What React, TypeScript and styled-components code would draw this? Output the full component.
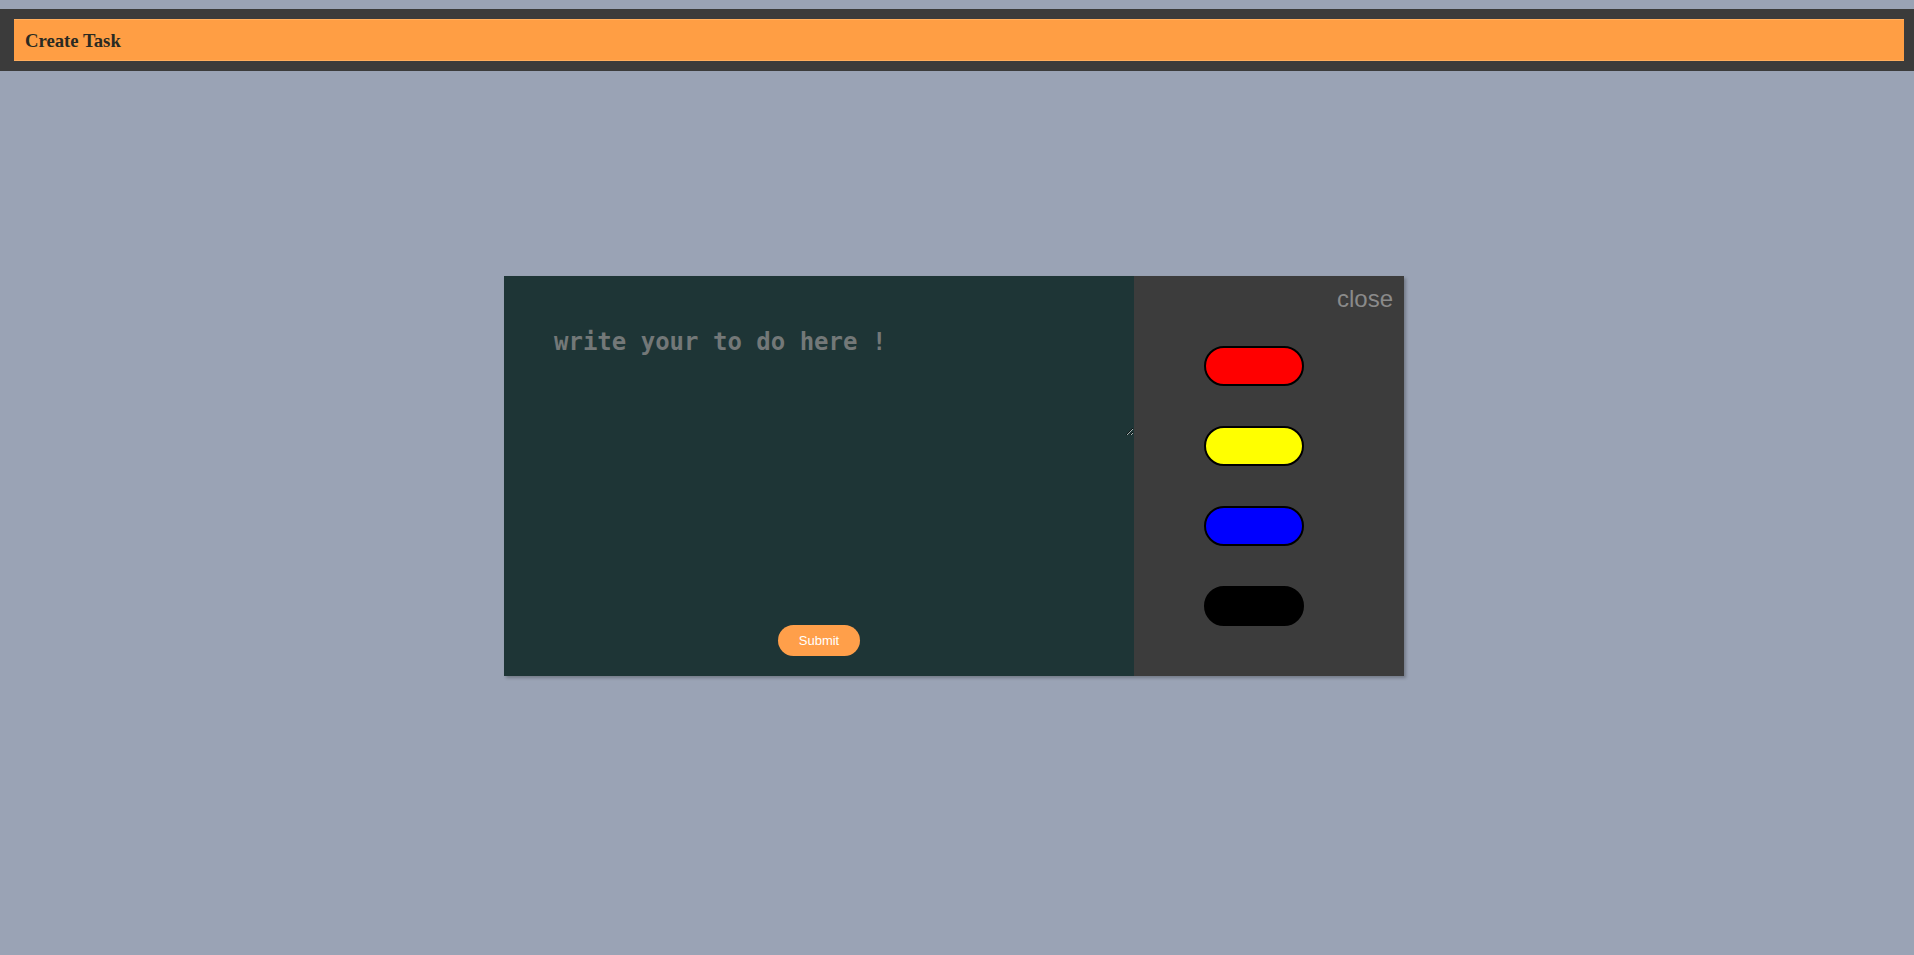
import React from "react";
import styled, { createGlobalStyle } from "styled-components";

const Global = createGlobalStyle`
  html, body { margin: 0; padding: 0; }
  body { background: #9aa3b5; font-family: "Liberation Serif", serif; }
  * { box-sizing: border-box; }
`;

const Page = styled.div`
  min-height: 100vh;
  padding-top: 9px;
  display: flex;
  flex-direction: column;
`;

const HeaderBar = styled.header`
  background: #3b3b3b;
  padding: 10px 10px 10px 14px;
`;

const HeaderInner = styled.div`
  background: #ff9e44;
  height: 42px;
  display: flex;
  align-items: center;
  padding: 0 11px;
  box-shadow: inset 0 1px 0 rgba(255, 190, 120, 0.5), inset 0 -1px 0 rgba(255, 190, 120, 0.5);
`;

const Title = styled.h3`
  margin: 0;
  font-family: "Liberation Serif", "Times New Roman", serif;
  font-size: 18.72px;
  font-weight: bold;
  color: #2a2a22;
  padding-top: 1px;
`;

const Main = styled.main`
  display: flex;
  justify-content: center;
  padding-top: 205px;
  padding-right: 6px;
`;

const Modal = styled.div`
  width: 900px;
  height: 400px;
  display: flex;
  box-shadow: 2px 2px 3px rgba(0, 0, 0, 0.25);
`;

const EditorPane = styled.form`
  flex: 0 0 630px;
  background: #1e3536;
  display: flex;
  flex-direction: column;
  align-items: center;
  padding-bottom: 20px;
`;

const TaskInput = styled.textarea`
  width: 100%;
  height: 160px;
  padding: 52px 50px 0 50px;
  background: transparent;
  border: none;
  outline: none;
  color: #ccc;
  font-family: "DejaVu Sans Mono", "Liberation Mono", monospace;
  font-weight: bold;
  font-size: 24px;
  line-height: 28px;
  margin-bottom: auto;
  &::placeholder {
    color: #737878;
  }
`;

const SubmitButton = styled.button`
  width: 82px;
  height: 31px;
  border: none;
  border-radius: 16px;
  background: #ff9f4a;
  color: #fff;
  font-family: "Liberation Sans", Arial, sans-serif;
  font-size: 13px;
  cursor: pointer;
`;

const ColorPane = styled.div`
  flex: 1;
  background: #3c3c3c;
  display: flex;
  flex-direction: column;
  padding: 70px 0 0 70px;
  gap: 40px;
  position: relative;
`;

const CloseLink = styled.span`
  position: absolute;
  top: 9px;
  right: 11px;
  font-family: "Liberation Sans", Arial, sans-serif;
  font-size: 24px;
  color: #8a8a8a;
  cursor: pointer;
`;

const ColorPill = styled.button<{ $color: string }>`
  width: 100px;
  height: 40px;
  border-radius: 20px;
  border: 2px solid #000;
  background: ${(p) => p.$color};
  padding: 0;
  cursor: pointer;
`;

const colors = ["#ff0000", "#ffff00", "#0000ff", "#000000"];

export default function App() {
  return (
    <>
      <Global />
      <Page>
        <HeaderBar>
          <HeaderInner>
            <Title>Create Task</Title>
          </HeaderInner>
        </HeaderBar>
        <Main>
          <Modal>
            <EditorPane onSubmit={(e) => e.preventDefault()}>
              <TaskInput placeholder="write your to do here !" />
              <SubmitButton type="submit">Submit</SubmitButton>
            </EditorPane>
            <ColorPane>
              <CloseLink>close</CloseLink>
              {colors.map((c) => (
                <ColorPill key={c} $color={c} aria-label={c} />
              ))}
            </ColorPane>
          </Modal>
        </Main>
      </Page>
    </>
  );
}
